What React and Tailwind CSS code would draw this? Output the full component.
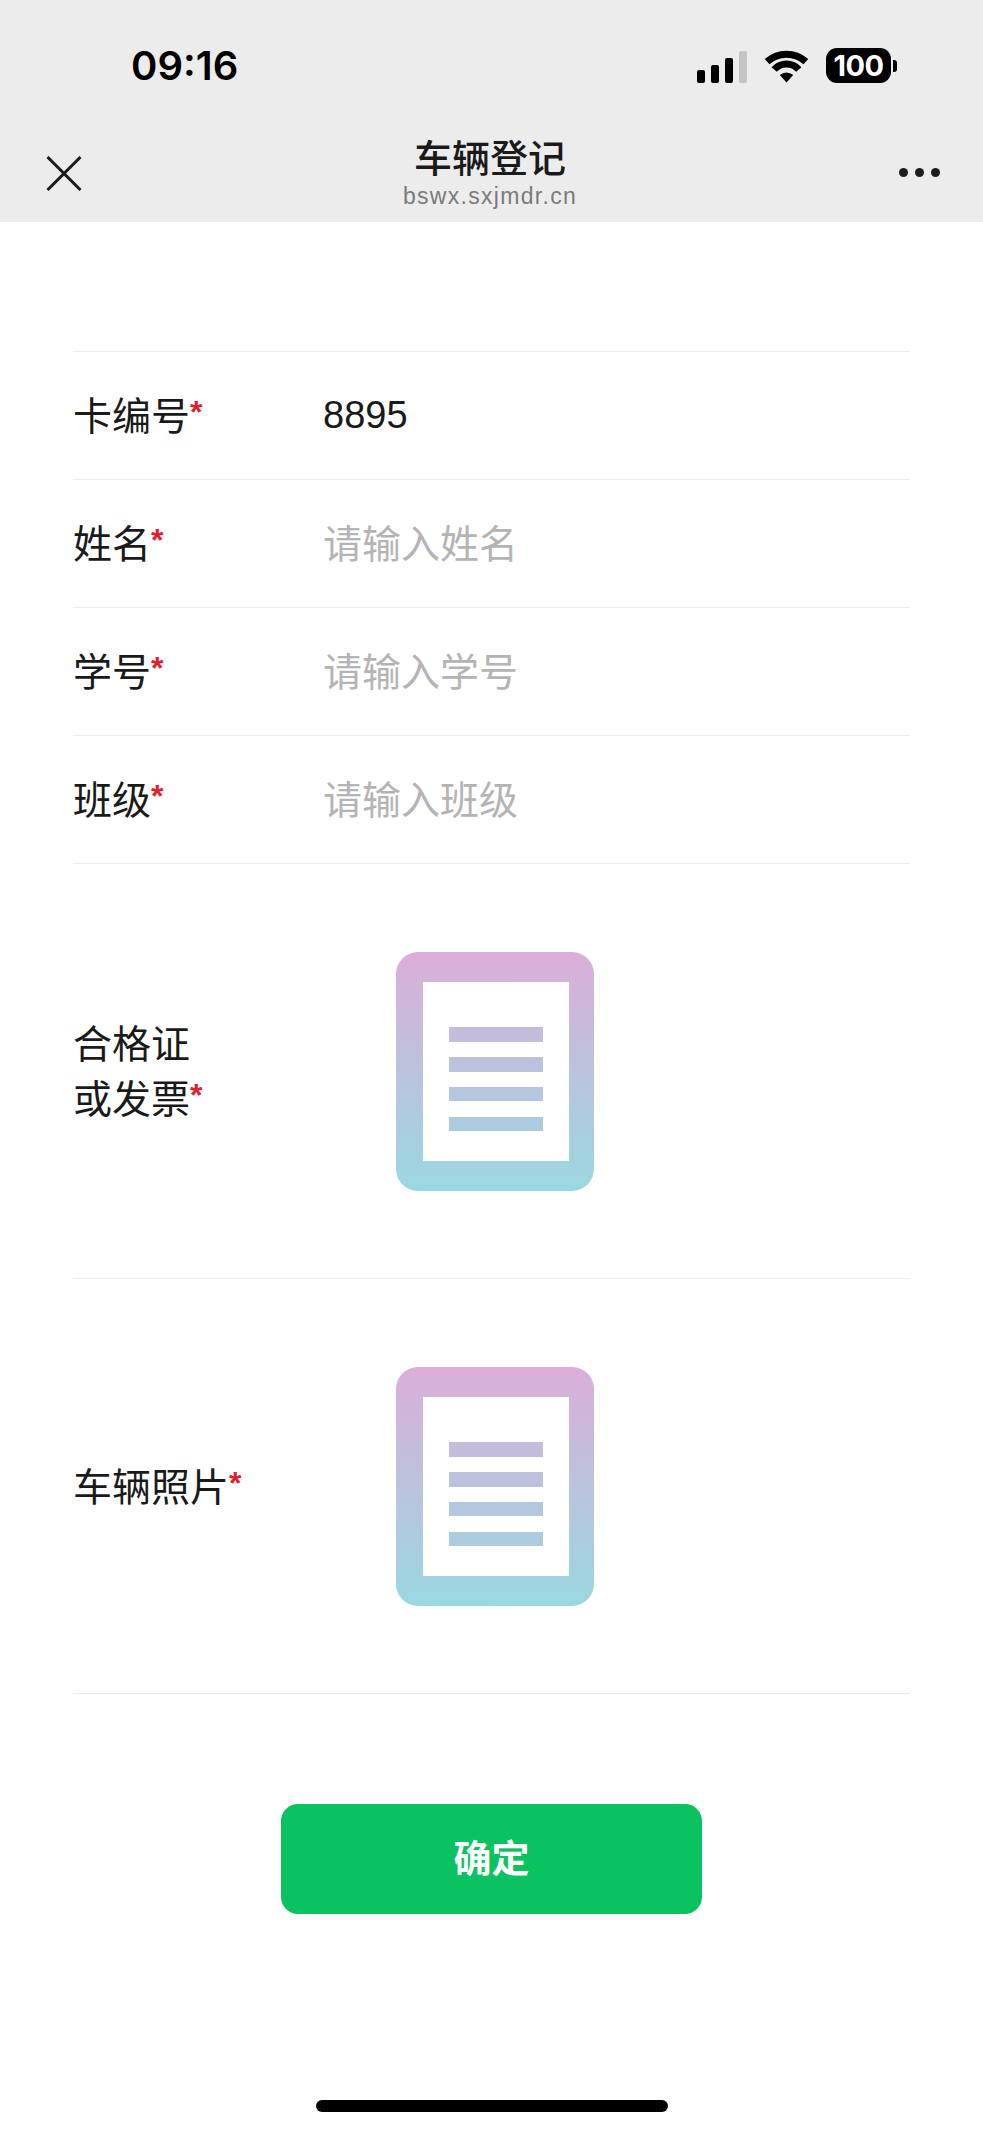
const FONT = "font-['Liberation_Sans','Noto_Sans_CJK_SC',sans-serif]";

function Signal() {
  return (
    <div className="flex items-end gap-[6px]">
      <div className="h-[13px] w-[8px] rounded-[2px] bg-black" />
      <div className="h-[18px] w-[8px] rounded-[2px] bg-black" />
      <div className="h-[25px] w-[8px] rounded-[2px] bg-black" />
      <div className="h-[32px] w-[8px] rounded-[2px] bg-[#c4c4c4]" />
    </div>
  );
}

function Wifi() {
  return (
    <svg width="43" height="33" viewBox="0 0 43 33" fill="none" className="block">
      <path d="M2.1 11.6 A29 29 0 0 1 40.9 11.6" stroke="#000" strokeWidth="7" />
      <path d="M9.2 19.5 A16.5 16.5 0 0 1 33.8 19.5" stroke="#000" strokeWidth="7" />
      <path d="M14.8 25.1 A10 10 0 0 1 28.2 25.1 L21.5 32.5 Z" fill="#000" />
    </svg>
  );
}

function Battery() {
  return (
    <div className="flex items-center gap-[2px]">
      <div className="flex h-[35px] w-[65px] items-center justify-center rounded-[11px] bg-black font-['Inter',sans-serif] text-[29px] font-bold leading-none tracking-[-0.5px] text-white">
        100
      </div>
      <div className="h-[12px] w-[4px] rounded-r-[3px] bg-black" />
    </div>
  );
}

function CloseIcon() {
  return (
    <svg width="36" height="35" viewBox="0 0 36 35" fill="none" className="block">
      <path d="M1.5 1 L34.5 34 M34.5 1 L1.5 34" stroke="#1c1c1c" strokeWidth="3" />
    </svg>
  );
}

function Dots() {
  return (
    <div className="flex items-center gap-[7px]">
      <div className="h-[9px] w-[9px] rounded-full bg-[#1c1c1c]" />
      <div className="h-[9px] w-[9px] rounded-full bg-[#1c1c1c]" />
      <div className="h-[9px] w-[9px] rounded-full bg-[#1c1c1c]" />
    </div>
  );
}

function Star() {
  return <span className="align-[7px] text-[32px] font-bold leading-none text-[#e0202c]">*</span>;
}

function TextRow({ label, value, placeholder }) {
  return (
    <div className="flex h-[128px] items-center border-b border-[#ececec]">
      <div className="w-[250px] pt-[3px] text-[39px] text-[#1a1a1a]">
        {label}
        <Star />
      </div>
      {value ? (
        <div className="text-[38px] text-[#1a1a1a]">{value}</div>
      ) : (
        <div className="pt-[4px] text-[39px] text-[#b4b4b4]">{placeholder}</div>
      )}
    </div>
  );
}

function DocIcon({ id }) {
  return (
    <svg width="198" height="239" viewBox="0 0 198 239" className="block">
      <defs>
        <linearGradient id={id} x1="0" y1="0" x2="0" y2="239" gradientUnits="userSpaceOnUse">
          <stop offset="0" stopColor="#dcaed8" />
          <stop offset="1" stopColor="#9ad8e2" />
        </linearGradient>
      </defs>
      <rect width="198" height="239" rx="22" fill={`url(#${id})`} />
      <rect x="27" y="30" width="146" height="179" fill="#fff" />
      <rect x="53" y="75" width="94" height="15" fill={`url(#${id})`} />
      <rect x="53" y="105" width="94" height="15" fill={`url(#${id})`} />
      <rect x="53" y="135" width="94" height="14" fill={`url(#${id})`} />
      <rect x="53" y="165" width="94" height="14" fill={`url(#${id})`} />
    </svg>
  );
}

function ImageRow({ id, children }) {
  return (
    <div className="flex h-[415px] items-center border-b border-[#ececec]">
      <div className="w-[323px] pt-[2px] text-[39px] leading-[55px] text-[#1a1a1a]">{children}</div>
      <DocIcon id={id} />
    </div>
  );
}

export default function App() {
  return (
    <div className={`${FONT} flex min-h-[2130px] w-full flex-col bg-white`}>
      <header className="h-[222px] bg-[#ececec]">
        <div className="flex h-[130px] items-start justify-between pl-[131px] pr-[86px] pt-[48px]">
          <div className="font-['Inter',sans-serif] text-[40px] font-semibold leading-[36px] text-black">09:16</div>
          <div className="flex items-end gap-[18px]">
            <Signal />
            <Wifi />
            <Battery />
          </div>
        </div>
        <div className="grid h-[92px] grid-cols-[1fr_auto_1fr] items-start pl-[46px] pr-[43px]">
          <div className="pt-[26px]">
            <CloseIcon />
          </div>
          <div className="flex flex-col items-center pr-[6px] pt-[6px]">
            <div className="text-[38px] font-medium leading-[46px] text-[#1a1a1a]">车辆登记</div>
            <div className="mt-[1px] text-[23px] leading-[26px] tracking-[1.3px] text-[#7b7b7b]">bswx.sxjmdr.cn</div>
          </div>
          <div className="flex justify-end pt-[38px]">
            <Dots />
          </div>
        </div>
      </header>

      <main className="mx-[73px] mt-[129px] border-t border-[#ececec]">
        <TextRow label="卡编号" value="8895" />
        <TextRow label="姓名" placeholder="请输入姓名" />
        <TextRow label="学号" placeholder="请输入学号" />
        <TextRow label="班级" placeholder="请输入班级" />
        <ImageRow id="docA">
          合格证
          <br />
          或发票
          <Star />
        </ImageRow>
        <ImageRow id="docB">
          车辆照片
          <Star />
        </ImageRow>
      </main>

      <div className="mt-[110px] flex justify-center">
        <button className="h-[110px] w-[421px] rounded-[17px] bg-[#0ac25f] text-[38px] font-bold text-white">确定</button>
      </div>

      <div className="mb-[18px] mt-auto flex justify-center">
        <div className="h-[12px] w-[352px] rounded-full bg-black" />
      </div>
    </div>
  );
}
